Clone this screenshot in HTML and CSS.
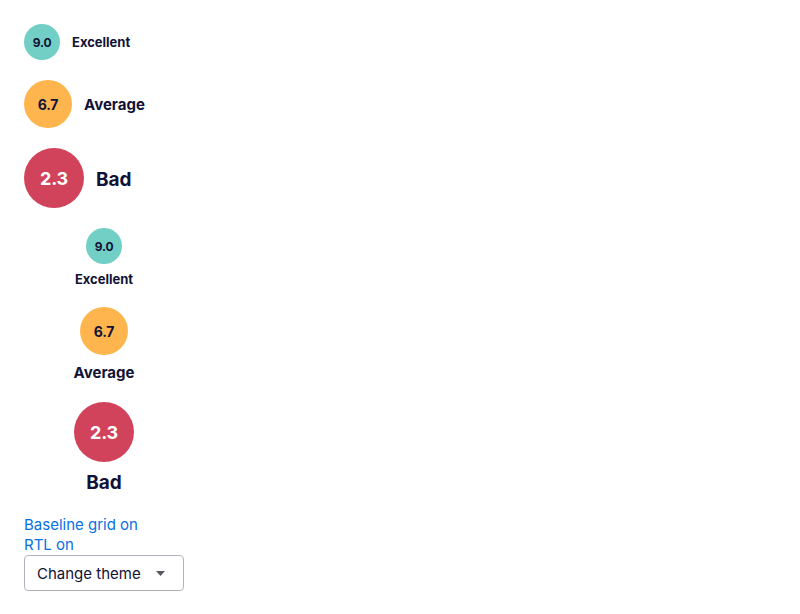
FILE: index.html
```html
<!DOCTYPE html>
<html>
<head>
<meta charset="utf-8">
<link rel="stylesheet" href="styles.css">
</head>
<body>
<div class="page">
  <div class="ratings">
    <div class="rating rating-sm">
      <div class="badge excellent">9.0</div>
      <span class="label">Excellent</span>
    </div>
    <div class="rating rating-md">
      <div class="badge average">6.7</div>
      <span class="label">Average</span>
    </div>
    <div class="rating rating-lg">
      <div class="badge bad">2.3</div>
      <span class="label">Bad</span>
    </div>
    <div class="rating vertical rating-sm">
      <div class="badge excellent">9.0</div>
      <span class="label">Excellent</span>
    </div>
    <div class="rating vertical rating-md">
      <div class="badge average">6.7</div>
      <span class="label">Average</span>
    </div>
    <div class="rating vertical rating-lg">
      <div class="badge bad">2.3</div>
      <span class="label">Bad</span>
    </div>
  </div>
  <div class="controls">
    <a class="link" href="#">Baseline grid on</a>
    <a class="link" href="#">RTL on</a>
    <div class="select">
      <span>Change theme</span>
      <svg class="caret" width="9" height="5" viewBox="0 0 9 5"><path d="M0 0h9L4.5 5z" fill="#545860"/></svg>
    </div>
  </div>
</div>
</body>
</html>
```
FILE: styles.css
```css
* { box-sizing: border-box; }
html, body { margin: 0; padding: 0; background: #fff; }
body {
  font-family: Inter, "Noto Sans", sans-serif;
  color: #111236;
}
.page {
  padding: 24px;
}
.ratings {
  display: flex;
  flex-direction: column;
  gap: 20px;
  align-items: flex-start;
}
.rating {
  display: flex;
  align-items: center;
  gap: 12px;
}
.rating.vertical {
  flex-direction: column;
  width: 160px;
  gap: 6px;
}
.badge {
  border-radius: 50%;
  display: flex;
  align-items: center;
  justify-content: center;
  font-weight: 700;
  letter-spacing: -0.2px;
  flex: none;
}
.label { font-weight: 700; }
.excellent { background: #72cfc5; color: #111236; }
.average { background: #ffb54d; color: #111236; }
.bad { background: #d1435b; color: #fff; }

.rating-sm .badge { width: 36px; height: 36px; font-size: 12px; }
.rating-sm .label { font-size: 13px; line-height: 16px; }
.rating-md .badge { width: 48px; height: 48px; font-size: 14px; }
.rating-md .label { font-size: 15px; line-height: 20px; padding-top: 2px; }
.rating-lg .badge { width: 60px; height: 60px; font-size: 18px; }
.rating-lg .label { font-size: 19px; line-height: 24px; padding-top: 3px; }

.rating.vertical .label { padding-top: 0; }
.rating.vertical.rating-sm { gap: 7px; }
.rating.vertical.rating-md { gap: 9px; }
.rating.vertical.rating-md .label { line-height: 18px; }
.rating.vertical.rating-lg { gap: 9px; }

.controls {
  margin-top: 20px;
  display: flex;
  flex-direction: column;
  align-items: flex-start;
}
.link {
  color: #0770e3;
  text-decoration: none;
  font-size: 15px;
  line-height: 20px;
}
.select {
  width: 160px;
  height: 36px;
  border: 1px solid #b2b2bf;
  border-radius: 4px;
  display: flex;
  align-items: center;
  justify-content: space-between;
  padding: 0 18px 0 12px;
  font-size: 15px;
  color: #111236;
}
.caret { display: block; }
```
